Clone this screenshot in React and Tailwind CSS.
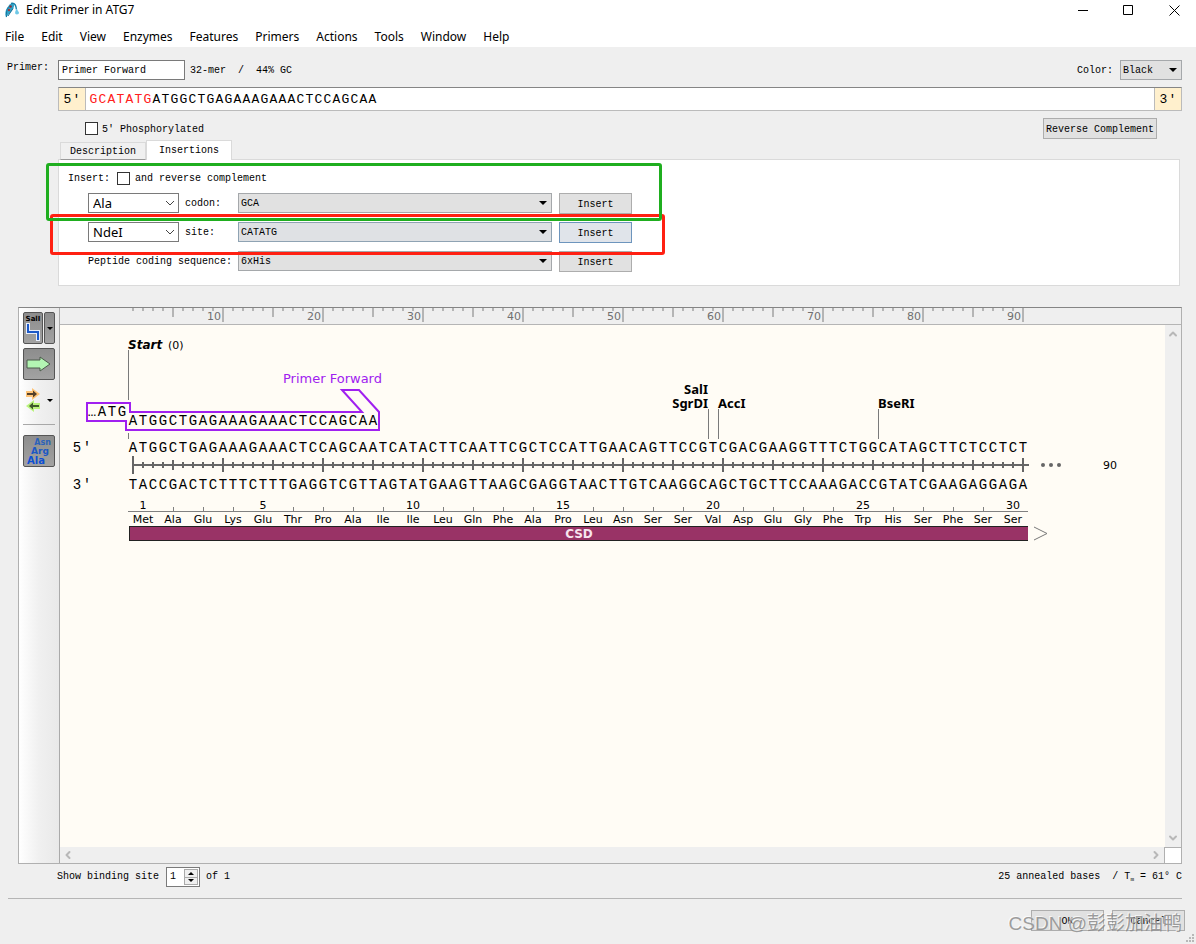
import React, { useState } from 'react';
import { ChevronDown, ChevronUp, ChevronLeft, ChevronRight } from 'lucide-react';

const MENU = ['File', 'Edit', 'View', 'Enzymes', 'Features', 'Primers', 'Actions', 'Tools', 'Window', 'Help'];

const TOP = 'ATGGCTGAGAAAGAAACTCCAGCAATCATACTTCAATTCGCTCCATTGAACAGTTCCGTCGACGAAGGTTTCTGGCATAGCTTCTCCTCT';
const BOTTOM = 'TACCGACTCTTTCTTTGAGGTCGTTAGTATGAAGTTAAGCGAGGTAACTTGTCAAGGCAGCTGCTTCCAAAGACCGTATCGAAGAGGAGA';
const RESIDUES = 'Met Ala Glu Lys Glu Thr Pro Ala Ile Ile Leu Gln Phe Ala Pro Leu Asn Ser Ser Val Asp Glu Gly Phe Trp His Ser Phe Ser Ser'.split(' ');
const POSITIONS = Array.from({ length: 90 }, (_, i) => i + 1);
const TENS = [10, 20, 30, 40, 50, 60, 70, 80, 90];

function Caret({ className = '' }) {
  return (
    <svg className={`pointer-events-none ${className}`} width="8" height="4" viewBox="0 0 8 4" aria-hidden="true">
      <path d="M0 0h8L4 4z" fill="#000" />
    </svg>
  );
}

function Bases({ seq }) {
  return (
    <div className="flex font-['Liberation_Mono',monospace] text-sm leading-4">
      {seq.split('').map((base, i) => (
        <span key={i} className="w-[10px] text-center">{base}</span>
      ))}
    </div>
  );
}

function PrimerBases({ seq, className = '' }) {
  return (
    <span className={`flex ${className}`}>
      {seq.split('').map((base, i) => (
        <span key={i} className="w-[9px] text-center">{base}</span>
      ))}
    </span>
  );
}

// Grey push-button style drop-down
function GreySelect({ id, value, className, hot }) {
  return (
    <div className={`relative flex h-5 items-center ${className}`}>
      <select
        id={id}
        defaultValue={value}
        className={`h-full w-full appearance-none border pl-[2px] pt-px ${hot ? 'border-[#8fa3b3] bg-[#dfe1e4]' : 'border-[#a5a8ab] bg-[#e1e1e1]'}`}
      >
        <option>{value}</option>
      </select>
      <Caret className="absolute right-[5px]" />
    </div>
  );
}

function EditSelect({ label, value }) {
  return (
    <div className="relative flex h-5 w-[91px] items-center">
      <select
        aria-label={label}
        defaultValue={value}
        className="h-full w-full appearance-none border border-[#7a7a7a] bg-white pl-1 font-['Noto_Sans',sans-serif] text-[13px] leading-4"
      >
        <option>{value}</option>
      </select>
      <svg className="pointer-events-none absolute right-1" width="10" height="6" viewBox="0 0 10 6" aria-hidden="true">
        <path d="M1 1l4 4 4-4" fill="none" stroke="#444" />
      </svg>
    </div>
  );
}

function PushButton({ children, className = '', hot }) {
  return (
    <button
      type="button"
      className={`h-[21px] border pt-[2px] text-center ${hot ? 'border-[#6d95bd] bg-[#e0e4ea]' : 'border-[#adadad] bg-[#e1e1e1]'} ${className}`}
    >
      {children}
    </button>
  );
}

function CheckBox({ id }) {
  return <input id={id} type="checkbox" className="h-[13px] w-[13px] appearance-none border border-[#333] bg-white checked:bg-[#333]" />;
}

function TitleBar() {
  return (
    <header className="bg-white font-['Noto_Sans',sans-serif] text-black">
      <div className="flex h-5 items-center pl-[5px]">
        <svg width="15" height="16" viewBox="0 0 15 16" aria-hidden="true">
          <path d="M1 15.500C0 12 0 9 2 6L4.500 2.500C6 1 8 1 9 2.500 9.500 4 8.500 6.500 7 8.500L3 13z" fill="#2fa3c9" />
          <path d="M1.500 15C1 12 1.500 8 3.500 5" fill="none" stroke="#17779f" />
          <path d="M3 14 8 6.500" stroke="#1b6f93" />
          <circle cx="5.500" cy="4.500" r="1.300" fill="#8a3038" />
          <circle cx="4" cy="8" r="1.200" fill="#9c3a3f" />
          <path d="M6 1.500c4-1 5 2 5.500 6" fill="none" stroke="#1780a8" strokeWidth="1.500" />
          <path d="M11.500 6.500 14 10.500c.3 2-2.500 2.500-3.500 1.500-1-1 0-3 1-5.500z" fill="#6fc8e6" />
        </svg>
        <h1 className="ml-[6px] flex-1 text-xs leading-4">Edit Primer in ATG7</h1>
        <div className="flex items-center pr-4">
          <button type="button" aria-label="Minimize" className="mr-[34px]">
            <svg width="11" height="11" viewBox="0 0 11 11"><path d="M0 5.500h10" stroke="#000" /></svg>
          </button>
          <button type="button" aria-label="Maximize" className="mr-[35px]">
            <svg width="11" height="11" viewBox="0 0 11 11"><path d="M.5.5h9v9h-9z" fill="none" stroke="#000" /></svg>
          </button>
          <button type="button" aria-label="Close">
            <svg width="11" height="11" viewBox="0 0 11 11"><path d="M.5.5l10 10M10.500.5l-10 10" stroke="#000" /></svg>
          </button>
        </div>
      </div>
      <nav className="flex h-[27px] items-center gap-[17px] pl-[5px] pt-[6px] text-xs leading-4">
        {MENU.map((item) => (
          <button key={item} type="button">{item}</button>
        ))}
      </nav>
    </header>
  );
}

function InsertionsPanel() {
  return (
    <div className="relative h-[127px] border border-[#dadada] bg-white">
      <div className="flex h-[33px] items-center pl-[9px] pt-1">
        <span>Insert:</span>
        <span className="ml-[7px] flex pb-px"><CheckBox id="revcomp" /></span>
        <label htmlFor="revcomp" className="ml-[5px]">and reverse complement</label>
      </div>
      <div className="flex flex-col gap-2 pl-[29px]">
        <div className="flex h-[21px] items-start">
          <EditSelect label="Amino acid" value="Ala" />
          <label htmlFor="codon" className="ml-[6px] w-[53px] pt-[5px]">codon:</label>
          <GreySelect id="codon" value="GCA" className="w-[314px]" />
          <PushButton className="ml-[7px] w-[73px]">Insert</PushButton>
        </div>
        <div className="flex h-[21px] items-start">
          <EditSelect label="Enzyme" value="NdeI" />
          <label htmlFor="site" className="ml-[6px] w-[53px] pt-[5px]">site:</label>
          <GreySelect id="site" value="CATATG" className="w-[314px]" hot />
          <PushButton className="ml-[7px] w-[73px]" hot>Insert</PushButton>
        </div>
        <div className="flex h-[21px] items-start">
          <label htmlFor="peptide" className="w-[150px] pt-[5px]">Peptide coding sequence:</label>
          <GreySelect id="peptide" value="6xHis" className="w-[314px]" />
          <PushButton className="ml-[7px] w-[73px]">Insert</PushButton>
        </div>
      </div>

      {/* Highlight frames */}
      <div className="pointer-events-none absolute -left-[9px] top-[54px] h-[41px] w-[615px] rounded-[3px] border-[3px] border-[#ff2012]" />
      <div className="pointer-events-none absolute -left-[13px] top-[3px] h-[58px] w-[616px] rounded-[3px] border-[3px] border-[#1fae1f]" />
    </div>
  );
}

function PrimerForm() {
  return (
    <section className="flex pl-[7px] pr-[14px] pt-[13px]">
      <label htmlFor="primer-name" className="w-[51px] shrink-0 pt-[2px]">Primer:</label>
      <div className="flex-1">
        <div className="flex items-center">
          <input id="primer-name" defaultValue="Primer Forward" className="h-5 w-[127px] border border-[#7a7a7a] bg-white pl-[3px] pt-px" />
          <span className="ml-[5px] pt-px">32-mer</span>
          <span className="ml-3 pt-px">/</span>
          <span className="ml-3 flex-1 pt-px">44% GC</span>
          <label htmlFor="color" className="mr-[7px] pt-px">Color:</label>
          <GreySelect id="color" value="Black" className="w-[62px]" />
        </div>

        <div className="mt-[7px] flex h-6 items-stretch border border-[#bbb] border-t-[#858585] bg-white font-['Liberation_Mono',monospace] text-[13px] leading-4">
          <div className="flex w-[27px] items-center border-r border-[#bbb] bg-[#fff0cd] pl-1 pt-[2px]"><PrimerBases seq="5′" /></div>
          <div className="flex flex-1 items-center pl-[3px] pt-[2px]">
            <PrimerBases seq="GCATATG" className="text-[#ff2020]" />
            <PrimerBases seq="ATGGCTGAGAAAGAAACTCCAGCAA" className="text-black" />
          </div>
          <div className="flex w-[27px] items-center border-l border-[#bbb] bg-[#fff0cd] pl-1 pt-[2px]"><PrimerBases seq="3′" /></div>
        </div>

        <div className="mt-[7px] flex h-[21px] items-center justify-between pl-[27px] pr-[25px]">
          <div className="flex items-center">
            <CheckBox id="phos" />
            <label htmlFor="phos" className="ml-1 pt-[2px]">5' Phosphorylated</label>
          </div>
          <PushButton className="w-[114px]">Reverse Complement</PushButton>
        </div>

        <div className="mr-[2px]">
          <div role="tablist" className="relative z-10 -mb-px mt-px flex h-[20px] items-end pl-[2px]">
            <button type="button" role="tab" aria-selected="false" className="h-[18px] w-[86px] border border-[#dadada] border-b-[#999] bg-[#f0f0f0] pt-[2px]">Description</button>
            <button type="button" role="tab" aria-selected="true" className="h-5 w-[86px] border border-b-0 border-[#dadada] bg-white pt-px">Insertions</button>
          </div>
          <InsertionsPanel />
        </div>
      </div>
    </section>
  );
}

function ToolRail() {
  const pressed = 'rounded-[2px] border border-[#555] bg-linear-to-b from-[#8d8d8d] to-[#a2a2a2]';
  return (
    <div className="flex w-[41px] shrink-0 flex-col border-r border-[#aaa] bg-linear-to-r from-white via-[#f0f0f0] to-[#e9e9e9] pl-1 pt-1">
      <div className="flex h-8 gap-px">
        <button type="button" aria-label="Show enzymes" className={`flex w-5 flex-col items-center pt-[2px] ${pressed}`}>
          <span className="font-['DejaVu_Sans',sans-serif] text-[7px] font-bold leading-[8px] text-black">SalI</span>
          <svg width="16" height="19" viewBox="0 0 16 19">
            <path d="M3 0v9h10v9" fill="none" stroke="#e8eefa" strokeWidth="4" />
            <path d="M3 1v8h10v8" fill="none" stroke="#1c59c8" strokeWidth="2" />
          </svg>
        </button>
        <button type="button" aria-label="Enzyme options" className={`flex w-[11px] items-center justify-center ${pressed}`}>
          <svg width="6" height="3" viewBox="0 0 6 3"><path d="M0 0h6L3 3z" /></svg>
        </button>
      </div>
      <button type="button" aria-label="Show features" className={`mt-1 flex h-8 w-8 items-center justify-center ${pressed}`}>
        <svg width="26" height="16" viewBox="0 0 26 16">
          <path d="M1 4h13V1l10 7-10 7v-3H1z" fill="#b3f5b3" stroke="#4c5b4c" />
        </svg>
      </button>
      <button type="button" aria-label="Show primers" className="mt-1 flex h-8 w-8 items-center justify-between">
        <svg width="16" height="24" viewBox="0 0 16 24" className="ml-[2px]">
          <path d="M1 3h6V0l8 6-8 6V9H1z" fill="#ffc477" />
          <path d="M2 5h6V2.500L12 6 8 9.500V7H2z" fill="#54402a" />
          <path d="M15 15H9v-3l-8 6 8 6v-3h6z" fill="#b9f37c" />
          <path d="M14 17H8v-2.500L4 18l4 3.500V19h6z" fill="#3f5a2a" />
        </svg>
        <svg width="6" height="3" viewBox="0 0 6 3" className="mr-[2px]"><path d="M0 0h6L3 3z" /></svg>
      </button>
      <div className="mt-2 h-px w-8 bg-[#a8a8a8]" />
      <button type="button" aria-label="Show translations" className={`mt-[10px] flex h-8 w-8 flex-col pt-[3px] font-['DejaVu_Sans',sans-serif] font-bold ${pressed}`}>
        <span className="self-end pr-[3px] text-[8px] leading-[8px] text-[#2c62ba]">Asn</span>
        <span className="pl-[7px] text-left text-[9px] leading-[9px] text-[#1c58c4]">Arg</span>
        <span className="pl-[3px] text-left text-[10px] leading-[9px] text-[#0d4fd4]">Ala</span>
      </button>
    </div>
  );
}

function Ruler() {
  return (
    <div className="relative flex h-[17px] shrink-0 overflow-hidden border-b border-[#b5b5b5] bg-[#efefef] pl-[61px] font-['DejaVu_Sans',sans-serif] text-[11px] leading-[18px] text-[#707070]">
      <svg className="absolute left-0 top-0" width="1000" height="16" viewBox="0 0 1000 16" aria-hidden="true">
        {POSITIONS.map((n) => (
          <rect key={n} x={62 + n * 10} y="0" width="2" height={n % 10 === 0 ? 14 : n % 5 === 0 ? 9 : 3} fill="#b5b5b5" />
        ))}
      </svg>
      {TENS.map((n) => (
        <span key={n} className="w-[100px] shrink-0 text-right">{n}</span>
      ))}
    </div>
  );
}

function StrandRow({ end, seq }) {
  return (
    <div className="flex h-4 items-center pl-3">
      <div className="w-14"><Bases seq={`${end}′`} /></div>
      <Bases seq={seq} />
    </div>
  );
}

function StrandTicks() {
  return (
    <div className="flex h-[18px] items-center pl-[68px]">
      <svg width="935" height="18" viewBox="0 0 935 18" fill="#666" aria-hidden="true">
        <rect x="4" y="8" width="897" height="2" />
        {POSITIONS.map((n) => {
          const h = n === 1 ? 18 : n % 10 === 0 ? 14 : n % 5 === 0 ? 10 : 6;
          return <rect key={n} x={n * 10 - 6} y={9 - h / 2} width="2" height={h} />;
        })}
        <circle cx="915" cy="9" r="2" />
        <circle cx="923" cy="9" r="2" />
        <circle cx="931" cy="9" r="2" />
      </svg>
      <span className="ml-10 pt-px font-['DejaVu_Sans',sans-serif] text-[11px] leading-4">90</span>
    </div>
  );
}

function SequenceMap() {
  return (
    <div className="relative min-w-0 flex-1 overflow-hidden bg-[#fffcf5] text-black">
      {/* Primer and cut sites sit at their place along the strand */}
      <div className="relative h-[115px] font-['DejaVu_Sans',sans-serif] text-xs leading-4">
        <svg className="absolute left-0 top-0" width="900" height="115" viewBox="0 0 900 115" fill="none" aria-hidden="true">
          <path d="M68.500 25v50M68.500 108v6M648.500 84v30M658.500 84v30M818.500 84v30" stroke="#7a7a7a" />
          <path d="M27 78h43v9h232l-20-22h17l20 22v18H66v-9H27z" stroke="#a020f0" strokeWidth="2" />
        </svg>
        <div className="absolute left-[68px] top-[12px]"><b className="italic">Start</b> <span className="ml-[2px] text-[11px]">(0)</span></div>
        <div className="absolute left-[223px] top-[46px] text-[13px] text-[#a020f0]">Primer Forward</div>
        <div className="absolute left-[27px] top-[79px]"><Bases seq="…ATG" /></div>
        <div className="absolute left-[68px] top-[88px]"><Bases seq="ATGGCTGAGAAAGAAACTCCAGCAA" /></div>
        <div className="absolute left-[588px] top-[57px] w-[60px] text-right font-['Noto_Sans',sans-serif] text-[13px] font-bold leading-[14px]">
          <div>SalI</div>
          <div>SgrDI</div>
        </div>
        <div className="absolute left-[658px] top-[71px] font-['Noto_Sans',sans-serif] text-[13px] font-bold leading-[14px]">AccI</div>
        <div className="absolute left-[818px] top-[71px] font-['Noto_Sans',sans-serif] text-[13px] font-bold leading-[14px]">BseRI</div>
      </div>

      <StrandRow end="5" seq={TOP} />
      <StrandTicks />
      <div className="pt-[3px]"><StrandRow end="3" seq={BOTTOM} /></div>

      <div className="ml-[68px] mt-[7px] w-[900px] font-['DejaVu_Sans',sans-serif] text-[11px]">
        <div className="flex h-3 items-end border-b border-[#808080]">
          {RESIDUES.map((_, i) => (
            <span key={i} className="flex w-[30px] justify-center leading-[10px]">
              {i === 0 || i % 5 === 4 ? i + 1 : <i className="block h-1 w-px bg-[#808080]" />}
            </span>
          ))}
        </div>
        <div className="flex h-[14px] items-center pt-px">
          {RESIDUES.map((name, i) => (
            <span key={i} className="w-[30px] text-center leading-[14px]">{name}</span>
          ))}
        </div>
      </div>
      <div className="flex pl-[69px]">
        <div className="h-[15px] w-[899px] border-y border-l border-[#222] bg-[#993366] text-center font-['DejaVu_Sans',sans-serif] text-xs font-bold leading-[14px] text-[#f7e4ee]">CSD</div>
        <svg width="14" height="15" viewBox="0 0 14 15" className="ml-[6px]" aria-hidden="true">
          <path d="M0 1l13 6.500L0 14" fill="none" stroke="#777" />
        </svg>
      </div>
    </div>
  );
}

function MapPane() {
  return (
    <section className="ml-[18px] mr-[14px] mt-[21px] flex flex-1 border border-[#b0b0b0] border-t-[#858585]">
      <ToolRail />
      <div className="flex min-w-0 flex-1 flex-col">
        <Ruler />
        <div className="flex flex-1">
          <SequenceMap />
          <div className="flex w-4 shrink-0 flex-col items-center justify-between bg-[#efefef] py-[3px] text-[#b8b8b8]">
            <button type="button" aria-label="Scroll up"><ChevronUp className="h-3 w-3" strokeWidth={4} /></button>
            <button type="button" aria-label="Scroll down"><ChevronDown className="h-3 w-3" strokeWidth={4} /></button>
          </div>
        </div>
        <div className="flex h-4 shrink-0 bg-[#efefef] text-[#b8b8b8]">
          <div className="flex flex-1 items-center justify-between px-[2px]">
            <button type="button" aria-label="Scroll left"><ChevronLeft className="h-3 w-3" strokeWidth={4} /></button>
            <button type="button" aria-label="Scroll right"><ChevronRight className="h-3 w-3" strokeWidth={4} /></button>
          </div>
          <div className="w-[17px] border-l border-t border-[#b0b0b0] bg-white" />
        </div>
      </div>
    </section>
  );
}

function Footer() {
  const [site, setSite] = useState(1);
  return (
    <footer>
      <div className="flex h-[26px] items-center pl-[57px] pr-[14px]">
        <label htmlFor="site-no">Show binding site</label>
        <div className="ml-[7px] flex h-5 w-[34px] items-center border border-[#7a7a7a] bg-white pr-px">
          <input id="site-no" value={site} onChange={(e) => setSite(e.target.value)} className="w-4 flex-1 pl-[3px] outline-none" />
          <div className="flex h-4 w-[14px] flex-col border border-[#aaa] bg-[#efefef]">
            <button type="button" aria-label="Next site" onClick={() => setSite(1)} className="flex flex-1 items-center justify-center border-b border-[#aaa]">
              <svg width="6" height="3" viewBox="0 0 6 3"><path d="M0 3h6L3 0z" /></svg>
            </button>
            <button type="button" aria-label="Previous site" onClick={() => setSite(1)} className="flex flex-1 items-center justify-center">
              <svg width="6" height="3" viewBox="0 0 6 3"><path d="M0 0h6L3 3z" /></svg>
            </button>
          </div>
        </div>
        <span className="ml-[6px] flex-1">of 1</span>
        <span>25 annealed bases</span>
        <span className="ml-3">/</span>
        <span className="ml-[6px]">T<sub className="text-[6px]">m</sub> = 61° C</span>
      </div>
      <hr className="ml-2 mr-[14px] mt-[8px] border-[#b5b5b5]" />
      <div className="relative flex h-[45px] justify-end gap-2 pr-[11px] pt-[11px]">
        <PushButton className="w-[73px]">OK</PushButton>
        <PushButton className="w-[73px]">Cancel</PushButton>
        <div className="pointer-events-none absolute right-[14px] top-[13px] font-['Liberation_Sans','Noto_Sans_CJK_SC',sans-serif] text-[19px] leading-6 text-[#858585]/80 [text-shadow:-1px_-1px_0_#ffffffb3]">CSDN @彭彭加油鸭</div>
        <svg className="absolute bottom-0 right-0" width="10" height="10" viewBox="0 0 10 10" fill="#b8b8b8" aria-hidden="true">
          <path d="M6 0h2v2H6zM3 3h2v2H3zM6 3h2v2H6zM0 6h2v2H0zM3 6h2v2H3zM6 6h2v2H6z" />
        </svg>
      </div>
    </footer>
  );
}

export default function App() {
  return (
    <div className="flex min-h-screen flex-col bg-[#efefef] font-['Liberation_Mono',monospace] text-[10px] leading-3 text-black">
      <TitleBar />
      <PrimerForm />
      <MapPane />
      <Footer />
    </div>
  );
}
